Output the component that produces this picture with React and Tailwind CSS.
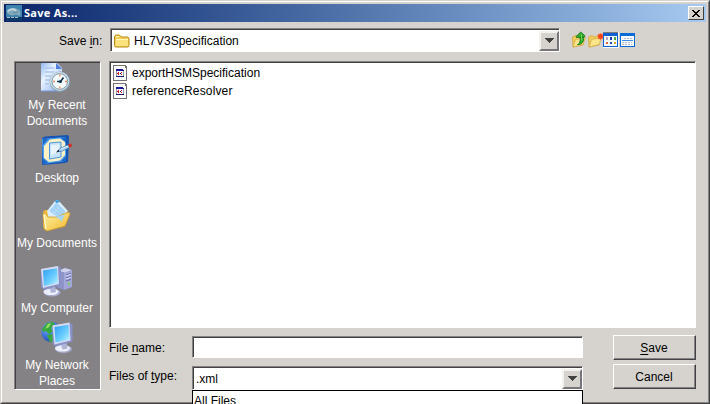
import React from 'react';

const FONT = "font-['Liberation_Sans',Arial,sans-serif]";

function RecentIcon() {
  return (
    <svg width="32" height="32" viewBox="0 0 32 32" className="block">
      <defs>
        <linearGradient id="rp" x1="0" y1="0" x2="1" y2="1">
          <stop offset="0" stopColor="#8fb6f4" />
          <stop offset=".35" stopColor="#e9f2ff" />
          <stop offset="1" stopColor="#8db0ee" />
        </linearGradient>
      </defs>
      <path d="M0 0H16L21 5V28H0Z" fill="url(#rp)" />
      <path d="M15 0L21 6H15Z" fill="#4f7fd8" />
      <path d="M4 5H13M4 9H13M4 13H10M4 17H9M4 21H8" stroke="#a9c6ef" strokeWidth="1.4" />
      <path d="M0 28H21" stroke="#7397dd" />
      <circle cx="19" cy="18.7" r="10.3" fill="#8599a9" />
      <circle cx="18.6" cy="18.3" r="9.6" fill="#c9dbe6" />
      <circle cx="18.8" cy="18.5" r="7.8" fill="#f4fafc" stroke="#7893a8" strokeWidth=".9" />
      <path d="M18.8 11.5V13.5M18.8 23.5V25.5M12 18.5H14M24 18.5H26" stroke="#ed8b4b" strokeWidth="1.4" />
      <path d="M16 18.5H19.5L22.5 14.5" stroke="#17364f" strokeWidth="1.7" fill="none" />
      <circle cx="19.5" cy="18.5" r="1.5" fill="#17364f" />
    </svg>
  );
}

function DesktopIcon() {
  return (
    <svg width="32" height="32" viewBox="0 0 32 32" className="block">
      <path d="M1 4L4 2.5L27 1L28 3L27 28L24 29L2 31L1 30Z" fill="#1755b4" />
      <path d="M1 5L25 3V27L2 30Z" fill="#4da0ee" />
      <path d="M2 5H7L2 11ZM25 3V9L20 4ZM2 30V24L7 29ZM25 27V22L20 27Z" fill="#1e68c6" />
      <path d="M9 5.5L19 4.5L24 8V21L19 26.5L8 28L3 24V12Z" fill="#fff1c4" />
      <path d="M8.5 9L20 8V23L8.5 25Z" fill="#c8e4fc" stroke="#4795df" strokeWidth="1" />
      <path d="M10 11.5L18 10.5V18L10 21Z" fill="#e8f5ff" />
      <path d="M16 17.5L20 13.8L27 11L28.5 13.4L21 17.2Z" fill="#a9d3f6" stroke="#3e78b8" strokeWidth=".7" />
      <path d="M20 15L27 12" stroke="#e2f4ff" strokeWidth="1" />
      <path d="M15 18.6L17.5 15.8L18.5 17.8Z" fill="#17212e" />
      <path d="M27 10.2L30 9.5L31 12.3L28.4 13.8Z" fill="#d52c20" />
    </svg>
  );
}

function DocumentsIcon() {
  return (
    <svg width="32" height="32" viewBox="0 0 32 32" className="block">
      <defs>
        <linearGradient id="df" x1="0" y1="0" x2="1" y2="1">
          <stop offset="0" stopColor="#fff2a4" />
          <stop offset="1" stopColor="#f2b92f" />
        </linearGradient>
      </defs>
      <path d="M2 12L4 10L9 10L11 12L28 13L23 27L5 29L2 27Z" fill="#eeb83c" />
      <path d="M6 11L14 1L17 0L27 11L19 20L8 20Z" fill="#d9edfd" />
      <path d="M8.5 11L15.5 2.5L24.5 11.5L18 18Z" fill="#9fd0f8" />
      <path d="M11 10L17 16M13 8L20 14.5M15 5.5L22 12.5M12 14L18 7" stroke="#c4e3fb" strokeWidth=".8" />
      <path d="M14 1L17 0L19 2L15 3Z" fill="#2c99e2" />
      <path d="M2 14L4 13L7 17L17 17L20 15L28 12L29 14L24 26L6 31L3 29Z" fill="url(#df)" stroke="#d29a24" strokeWidth=".8" />
      <path d="M14 17L24 14.5L20 22L19 19Z" fill="#a4d5f7" />
      <path d="M3 15L5 29" stroke="#fffbd0" strokeWidth="1.2" />
    </svg>
  );
}

function Monitor({ id }) {
  return (
    <g>
      <defs>
        <linearGradient id={id} x1="0" y1="0" x2="1" y2="1">
          <stop offset="0" stopColor="#2b9df2" />
          <stop offset=".6" stopColor="#6fd0ff" />
          <stop offset="1" stopColor="#c9f5ff" />
        </linearGradient>
      </defs>
      <ellipse cx="11" cy="26.5" rx="8.5" ry="4" fill="#a5a9cf" />
      <ellipse cx="10" cy="25.8" rx="7.5" ry="3.3" fill="#eceefa" />
      <path d="M8 20H14L15 26L10 27Z" fill="#aeb4d8" />
      <path d="M0 3L17 0L20 2V19L3 24L0 21Z" fill="#8890c8" />
      <path d="M0 3L17 0L18 18L2 22Z" fill="#d6dbf3" />
      <path d="M2 4.6L16 2.2L17 17L3 20Z" fill={`url(#${id})`} />
    </g>
  );
}

function ComputerIcon() {
  return (
    <svg width="32" height="32" viewBox="0 0 32 32" className="block">
      <path d="M17 6L24 3L31 5V22L23 25L16 23Z" fill="#777cb9" />
      <path d="M17 6L23 7.5V25L16 22Z" fill="#8f94c6" />
      <path d="M23 7.5L31 5V22L23 25Z" fill="#a3a7d8" />
      <path d="M17 6L24 3L31 5L24 7.5Z" fill="#cfd3ee" />
      <path d="M25 10L30 8.3M25 13L30 11.3M25 16L30 14.3" stroke="#686da9" />
      <path d="M25 11L30 9.3M25 14L30 12.3" stroke="#d4d8f4" />
      <circle cx="28" cy="18.5" r="1.2" fill="#76d45a" />
      <g transform="translate(0 1)"><Monitor id="mc" /></g>
    </svg>
  );
}

function NetworkIcon() {
  return (
    <svg width="32" height="32" viewBox="0 0 32 32" className="block">
      <defs>
        <radialGradient id="gl" cx=".35" cy=".3" r=".8">
          <stop offset="0" stopColor="#79b4ff" />
          <stop offset="1" stopColor="#103eb4" />
        </radialGradient>
      </defs>
      <circle cx="10.5" cy="11" r="10.2" fill="url(#gl)" />
      <path d="M6 2L12 1L14 4L10 7L12 10L8 13L5 10L2 11L1 8ZM6 14L12 13L15 17L12 21H9Z" fill="#37a93c" />
      <path d="M7 3L10 2L8 6L4 8Z" fill="#9be067" />
      <g transform="translate(11.5 1.5)">
        <Monitor id="mn" />
      </g>
    </svg>
  );
}

function Folder() {
  return (
    <svg width="16" height="14" viewBox="0 0 16 14" className="block shrink-0">
      <path d="M.5 3Q.5 1 2.5 1H5.5L7.5 3H13.5Q15 3 15 5V11.5Q15 13 13.5 13H2Q.5 13 .5 11.5Z" fill="#f1cd55" stroke="#b88a17" />
      <path d="M1.5 5.5H14V11Q14 12 13 12H2.5Q1.5 12 1.5 11Z" fill="#fae27f" />
      <path d="M2 5.5H14M2 2.5H5" stroke="#fff8bd" />
    </svg>
  );
}

function OpenFolder() {
  return (
    <g>
      <path d="M.5 6L4 4.5L6 6L11 4.5V14L1 16Z" fill="#f0cc5c" stroke="#cf9f34" strokeWidth=".7" />
      <path d="M3.5 8.5L13.5 6.5L11 13.5L1 16Z" fill="#fbe68c" stroke="#d3a83c" strokeWidth=".7" />
    </g>
  );
}

function UpIcon() {
  return (
    <svg width="15" height="17" viewBox="0 0 15 17" className="block">
      <OpenFolder />
      <path d="M5.5 13.5C8 13 8.3 10 8 6H11.5C12.3 11 9.8 13.8 5.5 13.5Z" fill="#2fae2d" stroke="#17701b" strokeWidth=".8" />
      <path d="M4 5.5L8.8 1L13 4.8L12.5 6L4.5 6.5Z" fill="#2fae2d" stroke="#17701b" strokeWidth=".8" />
      <path d="M9.5 3.5V9.5" stroke="#6ed658" />
    </svg>
  );
}

function NewFolderIcon() {
  return (
    <svg width="16" height="17" viewBox="0 0 16 17" className="block">
      <OpenFolder />
      <path d="M12.5 2V9M9.5 5.5H16M10 3L15 8M15 3L10 8" stroke="#ff7a4b" strokeWidth="1.5" />
      <circle cx="12.5" cy="5.5" r="2.4" fill="#f5441a" />
    </svg>
  );
}

function GridIcon() {
  return (
    <svg width="16" height="16" viewBox="0 0 16 16" className="block">
      <path d="M0 0H16V1H0Z" fill="#7d7b80" />
      <path d="M0 1H15V15H0Z" fill="#0b62d0" />
      <path d="M1 4H14V14H1Z" fill="#f7fafd" />
      <path d="M15 0H16V16H0V15H15Z" fill="#fff" />
      <path d="M3 5H5V8H3Z" fill="#b6a6c8" />
      <path d="M7 5H9V8H7Z" fill="#1b3cb0" />
      <path d="M11 5H13V8H11Z" fill="#41a541" />
      <path d="M3 10H5V12H3Z" fill="#e8623c" />
      <path d="M7 10H9V12H7Z" fill="#1b50c0" />
      <path d="M11 10H13V12H11Z" fill="#d6a720" />
    </svg>
  );
}

function DetailsIcon() {
  return (
    <svg width="16" height="16" viewBox="0 0 16 16" className="block">
      <path d="M0 1H15V15H0Z" fill="#0b6bd6" />
      <path d="M1 4H14V14H1Z" fill="#f7fafd" />
      <path d="M2 8.5H13" stroke="#3b8be0" />
      <path d="M4 6.5H13M2 10.5H12M2 12.5H12" stroke="#b5bcc4" strokeDasharray="2 1" />
    </svg>
  );
}

function FileIcon() {
  return (
    <svg width="14" height="16" viewBox="0 0 14 16" className="block" shapeRendering="crispEdges">
      <path d="M0 0H12L14 2V16H0Z" fill="#737173" />
      <path d="M1 1H12V3H13V15H1Z" fill="#fff" />
      <path d="M3 4H11V12H3Z" fill="#9a98b4" />
      <path d="M3 4H11V6H3Z" fill="#18189e" />
      <path d="M4 6H10V11H4Z" fill="#fff" />
      <path d="M10 4H11V5H10Z" fill="#fff" />
      <path d="M4 8H6V9H4ZM5 7H6V10H5Z" fill="#d11a1a" />
      <path d="M7 8H8V9H7Z" fill="#18186e" />
      <path d="M8 7H9V8H8ZM8 9H9V10H8Z" fill="#d11a1a" />
      <path d="M3 11H11V12H3Z" fill="#18186e" />
    </svg>
  );
}

function AppIcon() {
  return (
    <svg width="16" height="16" viewBox="0 0 16 16" className="block">
      <path d="M0 0H16V16H0Z" fill="#3f84ac" />
      <path d="M0 12H16V16H0Z" fill="#0d3766" />
      <path d="M1 7C4 2 12 2 14.5 7L14 11L10 9.5L6 10.5L2 9Z" fill="#83a9bb" />
      <path d="M1.5 6.5C4 3.5 8 3.8 10 5.5" stroke="#c3d8e0" strokeWidth="1.8" fill="none" />
      <path d="M7 8L12 7" stroke="#5d8aa2" />
      <path d="M1 12.5H13" stroke="#b5cfda" strokeWidth=".9" strokeDasharray="3 1" />
    </svg>
  );
}

function DropButton() {
  return (
    <div className="flex h-5 w-5 shrink-0 items-center justify-center border-2 border-t-[#f4f2ee] border-r-[#77757a] border-b-[#77757a] border-l-[#f4f2ee] bg-[#d6d3ce]">
      <svg width="10" height="5" viewBox="0 0 10 5" className="block" shapeRendering="crispEdges">
        <path d="M0 0H10L5 5Z" fill="#424142" />
      </svg>
    </div>
  );
}

const sunken =
  'border border-t-[#848284] border-l-[#848284] border-r-white border-b-white bg-white';
const inner =
  'border-t border-l border-t-[#424142] border-l-[#424142]';

function Place({ icon, lines, className }) {
  return (
    <div className={`flex shrink-0 flex-col items-center text-center leading-4 text-white ${className}`}>
      <div className="h-8">{icon}</div>
      {lines.map((l) => (
        <div key={l} className="whitespace-nowrap">{l}</div>
      ))}
    </div>
  );
}

function PushButton({ children }) {
  return (
    <div className="flex h-[25px] w-[83px] items-center justify-center border border-t-white border-l-white border-r-[#424142] border-b-[#424142]">
      <div className="flex h-full w-full items-center justify-center border-r border-b border-[#848284] pt-0.5">
        <span>{children}</span>
      </div>
    </div>
  );
}

export default function App() {
  return (
    <div className={`relative h-[404px] w-[710px] overflow-hidden bg-[#d6d3ce] text-[12px] leading-4 text-black ${FONT}`}>
      <div className="h-full border border-t-[#d6d3ce] border-l-[#d6d3ce] border-r-[#424142] border-b-[#424142]">
        <div className="h-full border border-t-white border-l-white border-r-[#848284] border-b-[#848284] p-0.5">
          <div className="flex h-[18px] items-center bg-gradient-to-r from-[#0a246a] to-[#a6caf0] pr-0.5 pl-0.5">
            <AppIcon />
            <span className="mb-px ml-[2px] font-['Noto_Sans','Open_Sans',sans-serif] text-[11px] leading-4 font-bold tracking-[0.3px] text-white">
              Save As...
            </span>
            <div className="ml-auto flex h-[14px] w-4 items-center justify-center border border-t-white border-l-white border-r-[#424142] border-b-[#424142] bg-[#d6d3ce]">
              <svg width="8" height="7" viewBox="0 0 8 7" shapeRendering="crispEdges">
                <path d="M0 0h2v1h1v1h2v-1h1v-1h2v1h-1v1h-1v1h-1v1h1v1h1v1h1v1h-2v-1h-1v-1h-2v1h-1v1h-2v-1h1v-1h1v-1h1v-1h-1v-1h-1v-1h-1z" />
              </svg>
            </div>
          </div>

          <div className="flex h-[39px] pt-1.5">
            <div className="mt-[5px] w-[106px] pl-[55px] whitespace-nowrap">
              Save <u className="underline-offset-2">i</u>n:
            </div>
            <div className={`h-6 w-[450px] ${sunken}`}>
              <div className={`flex h-full items-center pl-[2px] ${inner}`}>
                <Folder />
                <span className="ml-1 grow">HL7V3Specification</span>
                <DropButton />
              </div>
            </div>
            <div className="mt-[3px] ml-3 flex">
              <UpIcon />
              <div className="ml-px"><NewFolderIcon /></div>
              <div className="mt-px -ml-px"><GridIcon /></div>
              <div className="mt-px ml-px"><DetailsIcon /></div>
            </div>
          </div>

          <div className="ml-[10px] flex">
            <div className="h-[329px] w-[87px] shrink-0 border border-t-[#848284] border-l-[#848284] border-r-white border-b-white">
              <div className={`flex h-full flex-col overflow-hidden bg-[#848284] pr-0.5 ${inner}`}>
                <Place icon={<RecentIcon />} lines={['My Recent', 'Documents']} className="[&>div:first-child]:mb-[2px]" />
                <Place icon={<DesktopIcon />} lines={['Desktop']} className="mt-[5px] gap-1" />
                <Place icon={<DocumentsIcon />} lines={['My Documents']} className="mt-[14px] gap-[3px]" />
                <Place icon={<ComputerIcon />} lines={['My Computer']} className="mt-[14px] gap-[3px]" />
                <Place icon={<NetworkIcon />} lines={['My Network', 'Places']} className="mt-[5px] [&>div:first-child]:mb-1" />
              </div>
            </div>
            <div className="ml-2 w-[587px]">
              <div className={`h-[267px] ${sunken}`}>
                <div className={`flex h-full flex-col gap-[2px] pt-[2px] pl-[2px] ${inner}`}>
                  <div className="flex items-center"><FileIcon /><span className="ml-[5px]">exportHSMSpecification</span></div>
                  <div className="flex items-center"><FileIcon /><span className="ml-[5px] tracking-[0.15px]">referenceResolver</span></div>
                </div>
              </div>
              <div className="mt-[7px] flex">
                <div className="w-[83px]">
                  <div className="mt-[5px]">File <u className="underline-offset-2">n</u>ame:</div>
                  <div className="mt-3">Files of <u className="underline-offset-2">t</u>ype:</div>
                </div>
                <div className="w-[391px] pt-px">
                  <div className={`h-[22px] ${sunken}`}><div className={`h-full ${inner}`} /></div>
                  <div className={`mt-2 h-6 ${sunken}`}>
                    <div className={`flex h-full items-center pl-[2px] ${inner}`}>
                      <span className="grow">.xml</span>
                      <DropButton />
                    </div>
                  </div>
                </div>
                <div className="ml-[30px] flex flex-col gap-1">
                  <PushButton><u className="underline-offset-2">S</u>ave</PushButton>
                  <PushButton>Cancel</PushButton>
                </div>
              </div>
            </div>
          </div>
        </div>
      </div>
      <div className="absolute top-[390px] left-[192px] h-5 w-[391px] border border-black bg-white pl-px pt-[2px]">
        All Files
      </div>
    </div>
  );
}
